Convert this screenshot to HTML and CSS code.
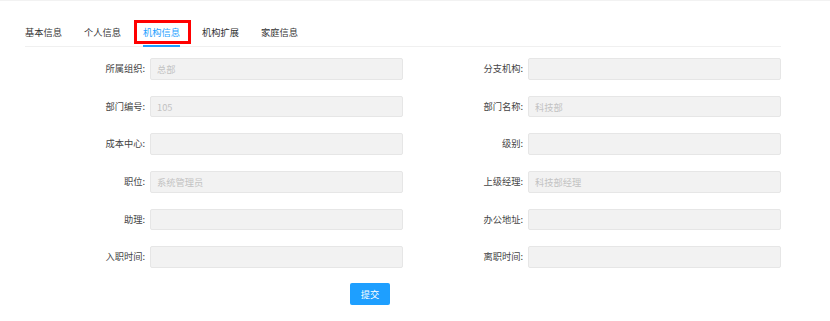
FILE: index.html
```html
<!DOCTYPE html>
<html lang="zh-CN">
<head>
    <meta charset="UTF-8">
    <title>机构信息</title>
    <link rel="stylesheet" href="styles.css">
</head>
<body>
    <div class="page">
        <ul class="tab-title">
            <li>基本信息</li>
            <li>个人信息</li>
            <li class="this">机构信息</li>
            <li>机构扩展</li>
            <li>家庭信息</li>
        </ul>

        <form class="org-form">
            <div class="form-grid">
                <div class="form-item">
                    <label>所属组织:</label>
                    <input type="text" placeholder="总部">
                </div>
                <div class="form-item">
                    <label>分支机构:</label>
                    <input type="text">
                </div>
                <div class="form-item">
                    <label>部门编号:</label>
                    <input type="text" placeholder="105">
                </div>
                <div class="form-item">
                    <label>部门名称:</label>
                    <input type="text" placeholder="科技部">
                </div>
                <div class="form-item">
                    <label>成本中心:</label>
                    <input type="text">
                </div>
                <div class="form-item">
                    <label>级别:</label>
                    <input type="text">
                </div>
                <div class="form-item">
                    <label>职位:</label>
                    <input type="text" placeholder="系统管理员">
                </div>
                <div class="form-item">
                    <label>上级经理:</label>
                    <input type="text" placeholder="科技部经理">
                </div>
                <div class="form-item">
                    <label>助理:</label>
                    <input type="text">
                </div>
                <div class="form-item">
                    <label>办公地址:</label>
                    <input type="text">
                </div>
                <div class="form-item">
                    <label>入职时间:</label>
                    <input type="text">
                </div>
                <div class="form-item">
                    <label>离职时间:</label>
                    <input type="text">
                </div>
            </div>

            <div class="form-actions">
                <button type="button" class="btn">提交</button>
            </div>
        </form>
    </div>
</body>
</html>
```

FILE: styles.css
```css
body {
    margin: 0;
    border-top: 1px solid #f2f2f2;
    font-family: "Noto Sans CJK SC", "Noto Sans", sans-serif;
    font-size: 9.25px;
    color: #333;
    background: #fff;
}

.page {
    padding: 0 49px 0 25px;
}

.tab-title {
    display: flex;
    gap: 22px;
    margin: 17px 0 0;
    padding: 0;
    list-style: none;
    border-bottom: 1px solid #f0f0f0;
}

.tab-title li {
    position: relative;
    height: 28px;
    line-height: 28px;
    white-space: nowrap;
}

.tab-title li.this {
    color: #1e9fff;
}

.tab-title li.this::after {
    content: "";
    position: absolute;
    left: 0;
    right: 0;
    bottom: -1px;
    height: 2px;
    background: #1e9fff;
}

/* red highlight box drawn over the active tab */
.tab-title li.this::before {
    content: "";
    position: absolute;
    left: -9px;
    top: 2px;
    width: 57px;
    height: 24px;
    box-sizing: border-box;
    border: 3px solid #f00;
}

.org-form {
    margin-top: 11.3px;
}

.form-grid {
    display: grid;
    grid-template-columns: 378px 378px;
    row-gap: 16.1px;
}

.form-item {
    display: flex;
}

.form-item label {
    width: 125px;
    box-sizing: border-box;
    padding-right: 5px;
    text-align: right;
    line-height: 21.5px;
    color: #444;
    white-space: nowrap;
}

.form-item input {
    width: 253px;
    height: 21.5px;
    box-sizing: border-box;
    margin: 0;
    padding: 0 6px;
    border: 1px solid #e6e6e6;
    border-radius: 2px;
    background: #f2f2f2;
    font-family: inherit;
    font-size: 9.25px;
    color: #666;
    outline: none;
}

.form-item input::placeholder {
    color: #c2c2c2;
}

.form-actions {
    margin-top: 15.5px;
    padding-left: 325px;
}

.btn {
    width: 40px;
    height: 22px;
    padding: 0;
    border: none;
    border-radius: 2px;
    background: #1e9fff;
    color: #fff;
    font-family: inherit;
    font-size: 9.25px;
    cursor: pointer;
}
```
